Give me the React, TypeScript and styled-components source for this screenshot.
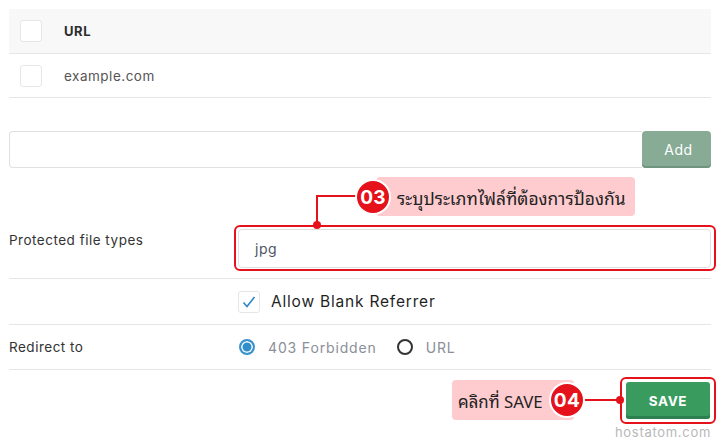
import styled, { createGlobalStyle } from "styled-components";

const GlobalStyle = createGlobalStyle`
    html, body {
        margin: 0;
        padding: 0;
        background: #ffffff;
    }
    body {
        font-family: "Inter", "Open Sans", "Noto Sans", sans-serif;
        color: #333;
    }
`;

const RED = "#e5121b";
const PINK = "#fecbcf";
const THAI = `"Noto Sans Thai Looped", "Tahoma", "Noto Sans Thai", "Noto Sans", sans-serif`;

const Page = styled.div`
    position: relative;
    width: 720px;
    height: 441px;
    box-sizing: border-box;
    padding: 9px 9px 0 9px;
    overflow: hidden;
`;

const Table = styled.div`
    display: flex;
    flex-direction: column;
`;

const TableRow = styled.div<{ head?: boolean }>`
    display: flex;
    align-items: center;
    gap: 22px;
    height: ${({ head }) => (head ? "44px" : "43px")};
    padding-left: 11px;
    background: ${({ head }) => (head ? "#f8f8f8" : "#fff")};
    border-bottom: 1px solid #e6e6e6;
    font-size: ${({ head }) => (head ? "13px" : "13.5px")};
    font-weight: ${({ head }) => (head ? 700 : 400)};
    color: ${({ head }) => (head ? "#2d2d2d" : "#555")};
    letter-spacing: ${({ head }) => (head ? "0.6px" : "0.5px")};
`;

const Box = styled.span`
    display: inline-flex;
    align-items: center;
    justify-content: center;
    width: 20px;
    height: 20px;
    border: 1px solid #e6e6e6;
    border-radius: 3px;
    background: #fff;
    flex-shrink: 0;
`;

const AddRow = styled.div`
    display: flex;
    margin-top: 33px;
    height: 37px;
`;

const TextInput = styled.div`
    flex: 1;
    box-sizing: border-box;
    border: 1px solid #e0e0e0;
    border-radius: 4px 0 0 4px;
    border-right: none;
    display: flex;
    align-items: center;
    padding-left: 16px;
    font-size: 14px;
    color: #4f5563;
    letter-spacing: 0.5px;
`;

const AddButton = styled.button`
    width: 69px;
    border: none;
    border-radius: 4px;
    background: #87ab95;
    box-shadow: inset 0 -2px 0 #6f9580;
    color: #fff;
    font-family: inherit;
    font-size: 14px;
    letter-spacing: 0.6px;
    padding: 0 0 0 4px;
`;

const Form = styled.div`
    margin-top: 50px;
`;

const FormRow = styled.div<{ h: number }>`
    display: grid;
    grid-template-columns: 229px 1fr;
    align-items: center;
    height: ${({ h }) => h}px;
    border-bottom: 1px solid #e6e6e6;
`;

const Label = styled.div<{ lift?: number }>`
    font-size: 13.5px;
    color: #333;
    letter-spacing: 0.5px;
    margin-bottom: ${({ lift }) => (lift ? lift * 2 : 0)}px;
`;

const FieldInput = styled(TextInput)`
    height: 39px;
    border-right: 1px solid #e0e0e0;
    border-radius: 4px;
`;

const Check = styled.label`
    display: flex;
    align-items: center;
    gap: 11px;
    font-size: 15.5px;
    color: #1f1f1f;
    letter-spacing: 0.8px;
`;

const Radios = styled.div`
    display: flex;
    align-items: center;
    gap: 19px;
    font-size: 14px;
    letter-spacing: 0.85px;
`;

const RadioItem = styled.span`
    display: flex;
    align-items: center;
    gap: 13px;
    color: #8a8f98;
`;

const Radio = styled.span<{ on?: boolean }>`
    width: 16px;
    height: 16px;
    box-sizing: border-box;
    border-radius: 50%;
    border: 2px solid ${({ on }) => (on ? "#3a93cf" : "#333")};
    background: ${({ on }) => (on ? "#2f8fcd" : "#fff")};
    box-shadow: ${({ on }) => (on ? "inset 0 0 0 1.5px #fff" : "none")};
    margin-left: 1px;
`;

const Footer = styled.div`
    display: flex;
    justify-content: flex-end;
    margin-top: 12px;
    padding-right: 1px;
`;

const SaveButton = styled.button`
    width: 84px;
    height: 37px;
    border: none;
    border-radius: 3px;
    background: #399c5e;
    box-shadow: inset 0 -3px 0 #2c8050;
    color: #fff;
    font-family: inherit;
    font-weight: 700;
    font-size: 13.5px;
    letter-spacing: 0.6px;
    padding: 0;
`;

const Watermark = styled.div`
    position: absolute;
    right: 9px;
    bottom: 1px;
    font-size: 13px;
    color: #b8b8b8;
    letter-spacing: 0.7px;
`;

/* callout overlays */
const Highlight = styled.div`
    position: absolute;
    border: 2px solid ${RED};
    border-radius: 6px;
    box-sizing: border-box;
    pointer-events: none;
`;

const Bubble = styled.div<{ size: number }>`
    position: absolute;
    height: 39px;
    background: ${PINK};
    border-radius: 4px;
    display: flex;
    align-items: center;
    font-family: ${THAI};
    font-size: ${({ size }) => size}px;
    color: #222;
    white-space: nowrap;
    box-sizing: border-box;
`;

const Badge = styled.div`
    position: absolute;
    width: 36px;
    height: 36px;
    box-sizing: border-box;
    border-radius: 50%;
    background: ${RED};
    border: 2px solid #fff;
    color: #fff;
    font-weight: 700;
    font-size: 19px;
    display: flex;
    align-items: center;
    justify-content: center;
    letter-spacing: 0.3px;
`;

const Line = styled.div`
    position: absolute;
    background: ${RED};
`;

const Dot = styled.div`
    position: absolute;
    width: 8px;
    height: 8px;
    border-radius: 50%;
    background: ${RED};
`;

export default function App() {
    return (
        <>
            <GlobalStyle />
            <Page>
                <Table>
                    <TableRow head>
                        <Box />
                        URL
                    </TableRow>
                    <TableRow>
                        <Box />
                        example.com
                    </TableRow>
                </Table>

                <AddRow>
                    <TextInput />
                    <AddButton>Add</AddButton>
                </AddRow>

                <Form>
                    <FormRow h={60}>
                        <Label lift={8}>Protected file types</Label>
                        <FieldInput>jpg</FieldInput>
                    </FormRow>
                    <FormRow h={45}>
                        <span />
                        <Check>
                            <Box>
                                <svg width="16" height="16" viewBox="0 0 16 16">
                                    <path d="M2.5 8.5 L6 12.5 L13.5 3" fill="none" stroke="#2f86c4" strokeWidth="1.6" />
                                </svg>
                            </Box>
                            Allow Blank Referrer
                        </Check>
                    </FormRow>
                    <FormRow h={44}>
                        <Label>Redirect to</Label>
                        <Radios>
                            <RadioItem>
                                <Radio on />
                                403 Forbidden
                            </RadioItem>
                            <RadioItem>
                                <Radio />
                                URL
                            </RadioItem>
                        </Radios>
                    </FormRow>
                </Form>

                <Footer>
                    <SaveButton>SAVE</SaveButton>
                </Footer>

                <Watermark>hostatom.com</Watermark>

                {/* callout 03 */}
                <Highlight style={{ left: 234, top: 225, width: 482, height: 46 }} />
                <Line style={{ left: 316, top: 195, width: 42, height: 2 }} />
                <Line style={{ left: 316, top: 195, width: 2, height: 30 }} />
                <Dot style={{ left: 313, top: 221 }} />
                <Bubble size={17.4} style={{ left: 376, top: 177, width: 259, paddingLeft: 21 }}>
                    ระบุประเภทไฟล์ที่ต้องการป้องกัน
                </Bubble>
                <Badge style={{ left: 355, top: 179 }}>03</Badge>

                {/* callout 04 */}
                <Highlight style={{ left: 620, top: 377, width: 96, height: 47 }} />
                <Line style={{ left: 580, top: 399, width: 40, height: 2 }} />
                <Dot style={{ left: 616, top: 396 }} />
                <Bubble size={16.8} style={{ left: 452, top: 380, width: 122, height: 40, paddingLeft: 6 }}>
                    คลิกที่ SAVE
                </Bubble>
                <Badge style={{ left: 549, top: 382 }}>04</Badge>
            </Page>
        </>
    );
}
